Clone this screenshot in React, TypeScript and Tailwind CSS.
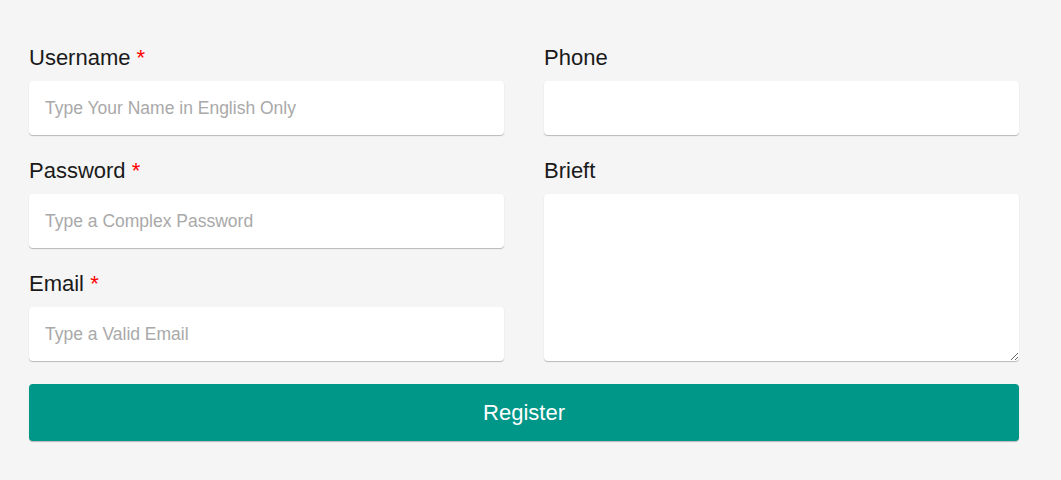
const Field = ({
  label,
  required,
  placeholder,
}: {
  label: string;
  required?: boolean;
  placeholder?: string;
}) => (
  <div className="flex flex-col">
    <label className="h-[28px] leading-[30px] text-[22px] text-[#1a1a1a] mb-[10px]">
      {label}
      {required && <span className="text-[#ff0000]"> *</span>}
    </label>
    <input
      className="h-[54px] w-full rounded bg-white px-4 text-[17.5px] text-[#333] placeholder:text-[#a9a9a9] outline-none shadow-[0_1px_1px_rgba(0,0,0,0.25)]"
      placeholder={placeholder}
    />
  </div>
);

export default function App() {
  return (
    <div
      className="min-h-[480px] w-full bg-[#f5f5f5] pl-[29px] pr-[42px] pt-[43px]"
      style={{ fontFamily: '"Liberation Sans", Arial, sans-serif' }}
    >
      <div className="grid grid-cols-2 gap-x-[40px]">
        <div className="flex flex-col gap-[21px]">
          <Field label="Username" required placeholder="Type Your Name in English Only" />
          <Field label="Password" required placeholder="Type a Complex Password" />
          <Field label="Email" required placeholder="Type a Valid Email" />
        </div>
        <div className="flex flex-col gap-[21px]">
          <Field label="Phone" />
          <div className="flex flex-1 flex-col">
            <label className="h-[28px] leading-[30px] text-[22px] text-[#1a1a1a] mb-[10px]">
              Brieft
            </label>
            <textarea className="flex-1 w-full rounded bg-white px-4 py-3 text-[17.5px] outline-none shadow-[0_1px_1px_rgba(0,0,0,0.25)]" />
          </div>
        </div>
      </div>
      <button className="mt-[23px] h-[57px] w-full rounded bg-[#009688] text-[22px] text-white shadow-[0_1px_1px_rgba(0,0,0,0.25)]">
        Register
      </button>
    </div>
  );
}
